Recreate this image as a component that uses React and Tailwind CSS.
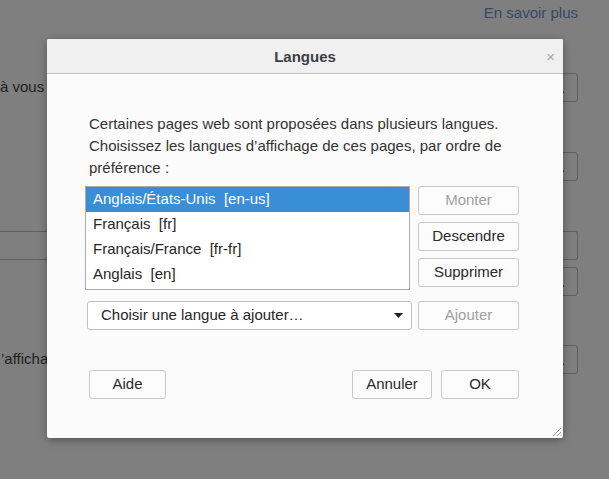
import React from 'react';

const font = { fontFamily: '"Liberation Sans", Arial, sans-serif' };

const langs = [
  'Anglais/États-Unis  [en-us]',
  'Français  [fr]',
  'Français/France  [fr-fr]',
  'Anglais  [en]',
];

function Btn({ children, className = '', disabled }) {
  return (
    <button
      className={
        'h-[29px] rounded-[3px] border border-[#c8c8c8] bg-[#fcfcfc] text-[15px] ' +
        (disabled ? 'text-[#a0a0a0] ' : 'text-[#2a2a2a] ') +
        className
      }
    >
      {children}
    </button>
  );
}

function BgBox() {
  return (
    <div className="w-[40px] h-[29px] rounded-[3px] border border-[#5f5f5f] flex items-center justify-end pr-[12px] text-[#111] text-[14px] leading-none">
      .
    </div>
  );
}

export default function App() {
  return (
    <div className="relative w-[609px] h-[479px] overflow-hidden bg-[#7f7f7f]" style={font}>
      {/* page behind the dialog */}
      <div className="flex flex-col pr-[31px] text-[15px] text-[#1e1e1e]">
        <div className="h-[27px] flex items-center justify-end text-[#314a68]">En savoir plus</div>
        <div className="mt-[46px] flex items-center justify-between">
          <span>à vous</span>
          <BgBox />
        </div>
        <div className="mt-[50px] flex justify-end">
          <BgBox />
        </div>
        <div className="mt-[50px] h-[29px] border-y border-r border-[#5f5f5f] rounded-r-[3px]" />
        <div className="mt-[7px] flex justify-end">
          <BgBox />
        </div>
        <div className="mt-[49px] flex items-center justify-between">
          <span className="ml-[1px]">’affichage</span>
          <BgBox />
        </div>
      </div>

      {/* dialog */}
      <div className="absolute left-[47px] top-[39px] w-[516px] h-[399px] bg-[#fbfbfb] rounded-[2px] shadow-[0_2px_8px_rgba(0,0,0,0.35)] flex flex-col">
        <div className="h-[35px] shrink-0 bg-[#f0f0f0] border-b border-[#c4c4c4] rounded-t-[2px] flex items-center justify-center relative">
          <span className="text-[15px] font-bold text-[#3b3f44] mt-[2px]">Langues</span>
          <span className="absolute right-[8px] top-[10px] text-[15px] leading-none text-[#a6a6a6]">×</span>
        </div>

        <div className="flex flex-col pl-[38px] pr-[44px] pt-[39px]">
          <p className="pl-[4px] text-[15px] leading-[22px] text-[#333]">
            Certaines pages web sont proposées dans plusieurs langues. Choisissez les langues d’affichage de ces pages, par ordre de préférence :
          </p>

          <div className="mt-[7px] flex gap-[8px]">
            <div className="w-[325px] h-[104px] border border-[#ababab] bg-white flex flex-col">
              {langs.map((l, i) => (
                <div
                  key={l}
                  className={
                    'h-[25px] flex items-center px-[7px] text-[15px] whitespace-pre ' +
                    (i === 0 ? 'bg-[#3a8ed8] text-white' : 'text-[#262626]')
                  }
                >
                  {l}
                </div>
              ))}
            </div>
            <div className="flex flex-col gap-[7px]">
              <Btn className="w-[101px]" disabled>Monter</Btn>
              <Btn className="w-[101px]">Descendre</Btn>
              <Btn className="w-[101px]">Supprimer</Btn>
            </div>
          </div>

          <div className="mt-[11px] flex gap-[6px] pl-[2px]">
            <div className="w-[325px] h-[29px] rounded-[3px] border border-[#c0c0c0] bg-white flex items-center justify-between pl-[13px] pr-[8px] text-[15px] text-[#262626]">
              <span>Choisir une langue à ajouter…</span>
              <svg width="9" height="5" viewBox="0 0 9 5"><path d="M0 0h9L4.5 5z" fill="#222" /></svg>
            </div>
            <Btn className="w-[101px]" disabled>Ajouter</Btn>
          </div>

          <div className="mt-[40px] flex items-center pl-[4px]">
            <Btn className="w-[77px]">Aide</Btn>
            <div className="flex-1" />
            <Btn className="w-[80px]">Annuler</Btn>
            <Btn className="w-[78px] ml-[9px]">OK</Btn>
          </div>
        </div>

        <div className="flex-1 flex items-end justify-end">
          <svg width="11" height="11" viewBox="0 0 11 11" className="mb-[1px] mr-[1px]">
            <path d="M10 2L2 10M10 6L6 10M10 9.5L9.5 10" stroke="#9a9a9a" strokeWidth="1" />
          </svg>
        </div>
      </div>
    </div>
  );
}
